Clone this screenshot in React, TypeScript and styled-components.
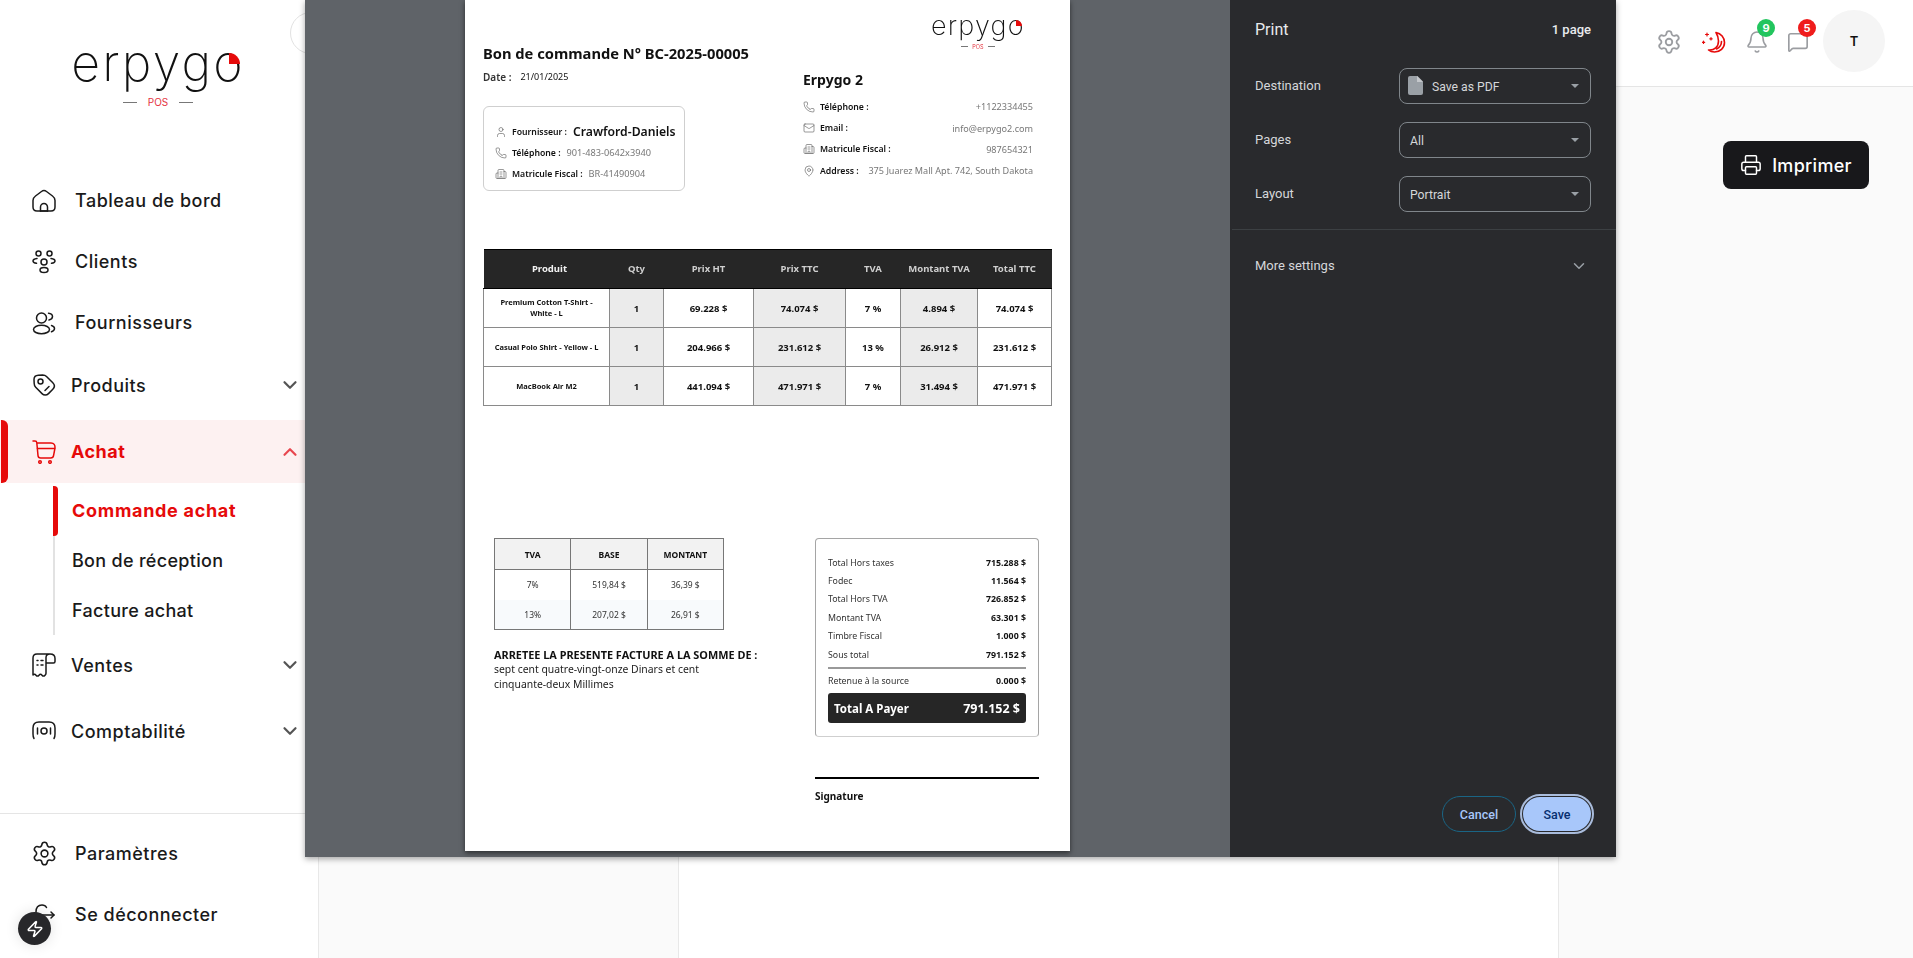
import styled, { createGlobalStyle } from 'styled-components';
import {
  Building2,
  ChevronDown,
  ChevronLeft,
  ChevronUp,
  Bell,
  Mail,
  MapPin,
  MessageSquare,
  Phone,
  Printer,
  Settings,
  User,
  Zap,
} from 'lucide-react';
import type { ReactNode } from 'react';

const GlobalStyle = createGlobalStyle`
  * { box-sizing: border-box; }
  html, body { margin: 0; height: 100%; overflow: hidden; background: #fafafa; }
  body { font-family: "Inter", "Liberation Sans", sans-serif; color: #111; }
`;

const SvgIcon = ({ children }: { children: ReactNode }) => (
  <svg width="24" height="24" viewBox="0 0 24 24" fill="none" stroke="currentColor" strokeWidth="1.5" strokeLinecap="round" strokeLinejoin="round">
    {children}
  </svg>
);

const HomeIcon = () => (
  <SvgIcon>
    <path d="M1 11.500C1 9.500 1.800 8.300 3.500 7l6-4.500c1.500-1.100 3.500-1.100 5 0l6 4.500c1.700 1.300 2.500 2.500 2.500 4.500v6.500c0 2.700-1.500 4-4 4H5c-2.500 0-4-1.300-4-4z" />
    <path d="M8.500 22v-4a3.500 3.500 0 0 1 7 0v4" />
    <path d="M8.500 22h7" />
  </SvgIcon>
);

const ClientsIcon = () => (
  <SvgIcon>
    <circle cx="6.500" cy="3.500" r="2.500" />
    <circle cx="17.500" cy="3.500" r="2.500" />
    <circle cx="12" cy="12" r="3" />
    <ellipse cx="12" cy="20" rx="4" ry="2.500" />
    <path d="M5 8.500C2.500 8.800 1 9.800 1 11s1.300 2 3.500 2.300" />
    <path d="M19 8.500c2.500.3 4 1.300 4 2.500s-1.300 2-3.500 2.300" />
  </SvgIcon>
);

const SuppliersIcon = () => (
  <SvgIcon>
    <circle cx="9.500" cy="7" r="5" />
    <ellipse cx="9.500" cy="18.500" rx="8" ry="4.200" />
    <path d="M16.500 2.200c2.300.3 4 1.300 4 3.300s-1.500 3-3.500 3.500" />
    <path d="M19.500 14.500c2 .6 3 1.600 3 3s-1 2.500-3 3.200" />
  </SvgIcon>
);

const TagIcon = () => (
  <SvgIcon>
    <path d="M2 6.500C2 4 3.800 2.300 6.300 2.200l4.400-.2c1.500 0 2.800.5 3.800 1.500l6.300 6.300c1.900 1.900 1.900 4.600 0 6.500l-4.300 4.300c-1.900 1.900-4.600 1.900-6.500 0l-6.300-6.300C2.700 13.300 2.200 12 2.200 10.600z" />
    <circle cx="8.500" cy="8.500" r="2.500" />
    <path d="M17 13.500l-4 4" />
  </SvgIcon>
);

const CartIcon = () => (
  <SvgIcon>
    <path d="M1 1h2c1 0 1.700.7 1.800 1.700L6 15.500C6.100 17 7 18 8.600 18h10c1.600 0 2.800-1 3-2.600L23 8c.2-3-1-5-4-5H5" />
    <path d="M5.500 8.500h17" />
    <circle cx="8" cy="22" r="1.300" />
    <circle cx="18" cy="22" r="1.300" />
  </SvgIcon>
);

const ReceiptIcon = () => (
  <SvgIcon>
    <path d="M18 1H5C2.500 1 1 2.500 1 5v17c1-1 2-1 3 .2 1 1.200 2 1.200 3 0s2-1.200 3 0 2 1.200 3 0c.7-.8 1-1 1-2V4.500C14 2.500 15.500 1 18 1c3 0 5 1.500 5 4.500v3c0 1-.5 1.500-1.500 1.500H14" />
    <path d="M5 7.500h1M9 7.500h2M5 12h1M9 12h2" />
  </SvgIcon>
);

const MoneyIcon = () => (
  <SvgIcon>
    <path d="M2 19.500C1.300 18.500 1 17 1 15V9c0-4 2-6 6-6h10c4 0 6 2 6 6v6c0 2-.3 3.500-1 4.500" />
    <circle cx="12" cy="12" r="3" />
    <path d="M5.500 9v6M18.500 9v6" />
  </SvgIcon>
);

const SignOutIcon = () => (
  <SvgIcon>
    <path d="M4 14V9c0-4 2-7 6-7 2 0 3.500.7 4.500 2.500" />
    <path d="M8 12h14" />
    <path d="M19 9l3 3-3 3" />
    <path d="M14.500 19.500C13.500 21.300 12 22 10 22c-3 0-5-1.500-5.500-4" />
  </SvgIcon>
);

const MoonIcon = () => (
  <svg width="24" height="24" viewBox="0 0 24 24" fill="none" stroke="#e60a0a" strokeWidth="1.600" strokeLinecap="round" strokeLinejoin="round">
    <path d="M14 2.500c5 1 8.500 5 8.500 10 0 5.500-4.500 9.500-10 9.500-2.500 0-4.500-.8-6-2 6 .5 10-3 10-9 0-3.500-1-6-2.500-8.500z" />
    <path d="M14.500 19c3-1.500 5-4 5-7.500" />
    <path d="M5 3v3M3.500 4.500h3M9 7.500v2.500M7.800 8.800h2.400M1.500 11v2.500M.3 12.300h2.400" strokeWidth="1.200" />
  </svg>
);

const FileGlyph = () => (
  <svg width="15" height="19" viewBox="0 0 15 19">
    <path d="M2 0h7.500L15 5.500V17a2 2 0 0 1-2 2H2a2 2 0 0 1-2-2V2a2 2 0 0 1 2-2z" fill="#9aa0a6" />
    <path d="M9 0l6 6H9z" fill="#c4c7cb" />
  </svg>
);

type NavEntry = { label: string; icon: ReactNode; height: number };

const topLinks: NavEntry[] = [
  { label: 'Tableau de bord', icon: <HomeIcon />, height: 61 },
  { label: 'Clients', icon: <ClientsIcon />, height: 61 },
  { label: 'Fournisseurs', icon: <SuppliersIcon />, height: 61 },
];

const purchaseLinks = ['Commande achat', 'Bon de réception', 'Facture achat'];

const supplierRows = [
  { label: 'Téléphone :', value: '901-483-0642x3940', icon: <Phone size={12} strokeWidth={1.2} /> },
  { label: 'Matricule Fiscal :', value: 'BR-41490904', icon: <Building2 size={12} strokeWidth={1.2} /> },
];

const companyRows = [
  { label: 'Téléphone :', value: '+1122334455', icon: <Phone size={12} strokeWidth={1.2} /> },
  { label: 'Email :', value: 'info@erpygo2.com', icon: <Mail size={12} strokeWidth={1.2} /> },
  { label: 'Matricule Fiscal :', value: '987654321', icon: <Building2 size={12} strokeWidth={1.2} /> },
  { label: 'Address :', value: '375 Juarez Mall Apt. 742, South Dakota', icon: <MapPin size={12} strokeWidth={1.2} /> },
];

const columns = [
  { title: 'Produit', width: 126 },
  { title: 'Qty', width: 54 },
  { title: 'Prix HT', width: 90 },
  { title: 'Prix TTC', width: 92 },
  { title: 'TVA', width: 55 },
  { title: 'Montant TVA', width: 77 },
  { title: 'Total TTC', width: 74 },
];

const products = [
  ['Premium Cotton T-Shirt - White - L', '1', '69.228 $', '74.074 $', '7 %', '4.894 $', '74.074 $'],
  ['Casual Polo Shirt - Yellow - L', '1', '204.966 $', '231.612 $', '13 %', '26.912 $', '231.612 $'],
  ['MacBook Air M2', '1', '441.094 $', '471.971 $', '7 %', '31.494 $', '471.971 $'],
];

const taxRows = [
  ['7%', '519,84 $', '36,39 $'],
  ['13%', '207,02 $', '26,91 $'],
];

const totals = [
  ['Total Hors taxes', '715.288 $'],
  ['Fodec', '11.564 $'],
  ['Total Hors TVA', '726.852 $'],
  ['Montant TVA', '63.301 $'],
  ['Timbre Fiscal', '1.000 $'],
  ['Sous total', '791.152 $'],
];

const printSelects = [
  { label: 'Destination', value: 'Save as PDF', withFile: true },
  { label: 'Pages', value: 'All', withFile: false },
  { label: 'Layout', value: 'Portrait', withFile: false },
];

export default function App() {
  return (
    <>
      <GlobalStyle />
      <Shell>
        <Sidebar>
          <CollapseButton>
            <ChevronLeft size={16} color="#e60a0a" />
          </CollapseButton>
          <LogoBlock>
            <Logo $size={50}>
              erpygo
              <LogoDot $size={11} />
            </Logo>
            <LogoSub $size={10} $line={14} $offset={5}>
              <i />
              POS
              <i />
            </LogoSub>
          </LogoBlock>
          {topLinks.map((link) => (
            <NavRow key={link.label} $height={link.height} $gap={19}>
              <NavIcon>{link.icon}</NavIcon>
              <NavLabel>{link.label}</NavLabel>
            </NavRow>
          ))}
          <NavRow $height={64} $gap={15}>
            <NavIcon>
              <TagIcon />
            </NavIcon>
            <NavLabel>Produits</NavLabel>
            <NavChevron>
              <ChevronDown size={22} strokeWidth={2.4} />
            </NavChevron>
          </NavRow>
          <ActiveRow>
            <NavIcon>
              <CartIcon />
            </NavIcon>
            <NavLabel $bold>Achat</NavLabel>
            <NavChevron>
              <ChevronUp size={22} strokeWidth={2.4} />
            </NavChevron>
          </ActiveRow>
          <SubMenu>
            {purchaseLinks.map((link, index) => (
              <SubItem key={link} $active={index === 0}>
                {link}
              </SubItem>
            ))}
          </SubMenu>
          <NavRow $height={60} $gap={15}>
            <NavIcon>
              <ReceiptIcon />
            </NavIcon>
            <NavLabel>Ventes</NavLabel>
            <NavChevron>
              <ChevronDown size={22} strokeWidth={2.4} />
            </NavChevron>
          </NavRow>
          <NavRow $height={60} $gap={15} $pushDown={6}>
            <NavIcon>
              <MoneyIcon />
            </NavIcon>
            <NavLabel>Comptabilité</NavLabel>
            <NavChevron>
              <ChevronDown size={22} strokeWidth={2.4} />
            </NavChevron>
          </NavRow>
          <SidebarFooter>
            <NavRow $height={61} $gap={19}>
              <NavIcon>
                <Settings size={27} strokeWidth={1.4} />
              </NavIcon>
              <NavLabel>Paramètres</NavLabel>
            </NavRow>
            <NavRow $height={61} $gap={19}>
              <NavIcon>
                <SignOutIcon />
              </NavIcon>
              <NavLabel>Se déconnecter</NavLabel>
            </NavRow>
            <BoltBadge>
              <Zap size={18} strokeWidth={2} />
            </BoltBadge>
          </SidebarFooter>
        </Sidebar>

        <Main>
          <TopBar>
            <TopIcon $after={4}>
              <Settings size={26} strokeWidth={1.7} />
            </TopIcon>
            <TopIcon $after={2}>
              <MoonIcon />
            </TopIcon>
            <TopIcon>
              <Bell size={24} strokeWidth={1.6} />
              <CountBadge $color="#22c55e">9</CountBadge>
            </TopIcon>
            <TopIcon>
              <MessageSquare size={22} strokeWidth={1.8} />
              <CountBadge $color="#ef1c1c">5</CountBadge>
            </TopIcon>
            <Avatar>T</Avatar>
          </TopBar>
          <Content>
            <SidePane />
            <CenterPane />
            <ActionPane>
              <PrintButton>
                <Printer size={22} strokeWidth={1.6} />
                Imprimer
              </PrintButton>
            </ActionPane>
          </Content>
        </Main>
      </Shell>

      <PrintDialog>
        <Preview>
          <Sheet>
            <SheetLogo>
              <Logo $size={27}>
                erpygo
                <LogoDot $size={6} />
              </Logo>
              <LogoSub $size={5.5} $line={7} $offset={3}>
                <i />
                POS
                <i />
              </LogoSub>
            </SheetLogo>
            <SheetTop>
              <SheetLeft>
                <DocTitle>Bon de commande N° BC-2025-00005</DocTitle>
                <DateLine>
                  <b>Date :</b>
                  <span>21/01/2025</span>
                </DateLine>
                <SupplierBox>
                  <SupplierRow>
                    <User size={12} strokeWidth={1.2} />
                    <b>Fournisseur :</b>
                    <SupplierName>Crawford-Daniels</SupplierName>
                  </SupplierRow>
                  {supplierRows.map((row) => (
                    <SupplierRow key={row.label}>
                      {row.icon}
                      <b>{row.label}</b>
                      <span>{row.value}</span>
                    </SupplierRow>
                  ))}
                </SupplierBox>
              </SheetLeft>
              <SheetRight>
                <CompanyName>Erpygo 2</CompanyName>
                {companyRows.map((row) => (
                  <CompanyRow key={row.label}>
                    {row.icon}
                    <b>{row.label}</b>
                    <span>{row.value}</span>
                  </CompanyRow>
                ))}
              </SheetRight>
            </SheetTop>

            <ProductTable>
              <colgroup>
                {columns.map((column) => (
                  <col key={column.title} width={column.width} />
                ))}
              </colgroup>
              <thead>
                <tr>
                  {columns.map((column, index) => (
                    <HeadCell key={column.title} $first={index === 0}>
                      {column.title}
                    </HeadCell>
                  ))}
                </tr>
              </thead>
              <tbody>
                {products.map((row) => (
                  <tr key={row[0]}>
                    {row.map((cell, index) => (
                      <BodyCell key={index} $shaded={index % 2 === 1 && index !== 2} $name={index === 0}>
                        {cell}
                      </BodyCell>
                    ))}
                  </tr>
                ))}
              </tbody>
            </ProductTable>

            <SheetBottom>
              <TaxColumn>
                <TaxTable>
                  <thead>
                    <tr>
                      <TaxHead>TVA</TaxHead>
                      <TaxHead>BASE</TaxHead>
                      <TaxHead>MONTANT</TaxHead>
                    </tr>
                  </thead>
                  <tbody>
                    {taxRows.map((row, rowIndex) => (
                      <TaxRow key={row[0]} $tinted={rowIndex === 1}>
                        {row.map((cell) => (
                          <TaxCell key={cell}>{cell}</TaxCell>
                        ))}
                      </TaxRow>
                    ))}
                  </tbody>
                </TaxTable>
                <AmountTitle>ARRETEE LA PRESENTE FACTURE A LA SOMME DE :</AmountTitle>
                <AmountText>
                  sept cent quatre-vingt-onze Dinars et cent
                  <br />
                  cinquante-deux Millimes
                </AmountText>
              </TaxColumn>
              <TotalsColumn>
                <TotalsBox>
                  {totals.map(([label, value]) => (
                    <TotalLine key={label}>
                      <span>{label}</span>
                      <b>{value}</b>
                    </TotalLine>
                  ))}
                  <TotalRule />
                  <TotalLine>
                    <span>Retenue à la source</span>
                    <b>0.000 $</b>
                  </TotalLine>
                  <GrandTotal>
                    <span>Total A Payer</span>
                    <strong>791.152 $</strong>
                  </GrandTotal>
                </TotalsBox>
                <SignatureRule />
                <SignatureLabel>Signature</SignatureLabel>
              </TotalsColumn>
            </SheetBottom>
          </Sheet>
        </Preview>

        <PrintPanel>
          <PanelHeading>
            <PanelTitle>Print</PanelTitle>
            <PageCount>1 page</PageCount>
          </PanelHeading>
          <SelectList>
            {printSelects.map((item) => (
              <SelectRow key={item.label}>
                <SelectLabel>{item.label}</SelectLabel>
                <SelectBox>
                  {item.withFile && (
                    <FileSlot>
                      <FileGlyph />
                    </FileSlot>
                  )}
                  <SelectValue>{item.value}</SelectValue>
                  <SelectCaret />
                </SelectBox>
              </SelectRow>
            ))}
          </SelectList>
          <MoreSettings>
            <SelectLabel>More settings</SelectLabel>
            <ChevronDown size={18} color="#9aa0a6" />
          </MoreSettings>
          <PanelFooter>
            <CancelButton>Cancel</CancelButton>
            <SaveButton>Save</SaveButton>
          </PanelFooter>
        </PrintPanel>
      </PrintDialog>
    </>
  );
}

const Shell = styled.div`
  display: flex;
  width: 100%;
  height: 100vh;
`;

const Sidebar = styled.aside`
  position: relative;
  display: flex;
  flex-direction: column;
  flex: 0 0 319px;
  background: #fff;
  border-right: 1px solid #e8e8e8;
  font-family: "Inter", "Liberation Sans", sans-serif;
`;

const CollapseButton = styled.div`
  position: absolute;
  top: 12px;
  left: 290px;
  display: flex;
  align-items: center;
  justify-content: center;
  width: 42px;
  height: 42px;
  background: #fff;
  border: 1px solid #e2e2e2;
  border-radius: 50%;
`;

const LogoBlock = styled.div`
  display: flex;
  flex-direction: column;
  align-items: center;
  flex: 0 0 170px;
  width: 316px;
  padding-top: 36px;
`;

const Logo = styled.div<{ $size: number }>`
  position: relative;
  font-family: "Inter", "Lato", sans-serif;
  font-weight: 200;
  font-size: ${({ $size }) => $size}px;
  line-height: 1.1;
  letter-spacing: 0.045em;
  color: #111;
`;

const LogoDot = styled.span<{ $size: number }>`
  position: absolute;
  right: 3%;
  top: 31%;
  width: ${({ $size }) => $size}px;
  height: ${({ $size }) => $size}px;
  background: #e60a0a;
  border-radius: 0 100% 0 0;
`;

const LogoSub = styled.div<{ $size: number; $line: number; $offset: number }>`
  display: flex;
  align-items: center;
  gap: ${({ $line }) => $line - 3}px;
  margin-top: ${({ $offset }) => $offset}px;
  font-family: "Inter", sans-serif;
  font-size: ${({ $size }) => $size}px;
  color: #e4343f;

  i {
    width: ${({ $line }) => $line}px;
    height: 1px;
    background: #777;
  }
`;

const NavRow = styled.div<{ $height: number; $gap: number; $pushDown?: number }>`
  display: flex;
  align-items: center;
  flex: 0 0 ${({ $height }) => $height}px;
  gap: ${({ $gap }) => $gap}px;
  margin-top: ${({ $pushDown }) => $pushDown ?? 0}px;
  padding: 0 17px 0 32px;
  color: #1a1a1a;
`;

const ActiveRow = styled.div`
  position: relative;
  display: flex;
  align-items: center;
  flex: 0 0 63px;
  gap: 15px;
  margin-top: 3px;
  padding: 0 17px 0 32px;
  background: #fdf1f1;
  color: #e60a0a;

  &::before {
    content: '';
    position: absolute;
    left: 1px;
    top: 0;
    bottom: 0;
    width: 7px;
    background: #e60a0a;
    border-radius: 0 6px 6px 0;
  }
`;

const NavIcon = styled.span`
  display: flex;
  align-items: center;
  justify-content: center;
  width: 24px;
  height: 24px;

  svg {
    flex: none;
  }
`;

const NavLabel = styled.span<{ $bold?: boolean }>`
  font-size: 18px;
  font-weight: ${({ $bold }) => ($bold ? 700 : 500)};
  letter-spacing: 0.5px;
`;

const NavChevron = styled.span`
  display: flex;
  margin-left: auto;
  color: #555;

  ${ActiveRow} & {
    color: #e8474f;
  }
`;

const SubMenu = styled.div`
  display: flex;
  flex-direction: column;
  flex: 0 0 149px;
  margin: 3px 0 0 53px;
  border-left: 2px solid #e2e2e2;
`;

const SubItem = styled.div<{ $active?: boolean }>`
  position: relative;
  display: flex;
  align-items: center;
  flex: 0 0 49.660px;
  padding-left: 17px;
  font-size: 18px;
  font-weight: ${({ $active }) => ($active ? 700 : 500)};
  letter-spacing: ${({ $active }) => ($active ? '0.7px' : '0.3px')};
  color: ${({ $active }) => ($active ? '#e60a0a' : '#1a1a1a')};

  &::before {
    content: '';
    display: ${({ $active }) => ($active ? 'block' : 'none')};
    position: absolute;
    left: -2px;
    top: 0;
    bottom: 0;
    width: 5px;
    background: #e60a0a;
    border-radius: 0 4px 4px 0;
  }
`;

const SidebarFooter = styled.div`
  position: relative;
  display: flex;
  flex-direction: column;
  margin-top: auto;
  flex: 0 0 145px;
  padding-top: 9px;
  border-top: 1px solid #e5e5e5;
`;

const BoltBadge = styled.div`
  position: absolute;
  left: 18px;
  bottom: 13px;
  display: flex;
  align-items: center;
  justify-content: center;
  width: 33px;
  height: 33px;
  background: #27272a;
  border-radius: 50%;
  color: #fff;
  box-shadow: 0 0 14px rgba(0, 0, 0, 0.12);
`;

const Main = styled.main`
  display: flex;
  flex-direction: column;
  flex: 1;
  min-width: 0;
`;

const TopBar = styled.header`
  display: flex;
  align-items: center;
  justify-content: flex-end;
  flex: 0 0 87px;
  gap: 17px;
  padding: 0 28px 4px 0;
  background: #fff;
  border-bottom: 1px solid #e5e5e5;
`;

const TopIcon = styled.span<{ $after?: number }>`
  position: relative;
  display: flex;
  align-items: center;
  justify-content: center;
  width: 24px;
  height: 24px;
  margin-top: 2px;
  margin-right: ${({ $after }) => $after ?? 0}px;
  color: #9b9da1;

  svg {
    flex: none;
  }
`;

const CountBadge = styled.span<{ $color: string }>`
  position: absolute;
  top: -11px;
  left: 12px;
  display: flex;
  align-items: center;
  justify-content: center;
  width: 18px;
  height: 18px;
  border-radius: 50%;
  background: ${({ $color }) => $color};
  color: #fff;
  font-size: 11px;
  font-weight: 700;
`;

const Avatar = styled.div`
  display: flex;
  align-items: center;
  justify-content: center;
  width: 62px;
  height: 62px;
  margin-left: -4px;
  border-radius: 50%;
  background: #f5f5f5;
  font-size: 13px;
  font-weight: 600;
`;

const Content = styled.div`
  display: flex;
  flex: 1;
`;

const SidePane = styled.div`
  flex: 0 0 359px;
  background: #fafafa;
`;

const CenterPane = styled.div`
  flex: 0 0 881px;
  background: #fff;
  border-left: 1px solid #e8e8e8;
  border-right: 1px solid #e8e8e8;
`;

const ActionPane = styled.div`
  flex: 1;
  padding: 54px 0 0 164px;
  background: #fafafa;
`;

const PrintButton = styled.div`
  display: flex;
  align-items: center;
  justify-content: center;
  gap: 10px;
  width: 146px;
  height: 48px;
  border-radius: 8px;
  background: #18181b;
  color: #fff;
  font-size: 18px;
  font-weight: 500;
  letter-spacing: 0.3px;
`;

const PrintDialog = styled.div`
  position: fixed;
  top: 0;
  left: 305px;
  display: flex;
  width: 1311px;
  height: 857px;
  box-shadow: 0 2px 6px rgba(0, 0, 0, 0.35);
`;

const Preview = styled.div`
  display: flex;
  justify-content: center;
  flex: 0 0 925px;
  background: #5f6368;
`;

const Sheet = styled.div`
  position: relative;
  width: 605px;
  height: 851px;
  padding: 0 18px;
  background: #fff;
  box-shadow: 0 2px 5px rgba(0, 0, 0, 0.55);
  font-family: "Noto Sans", "Open Sans", sans-serif;
  color: #111;
`;

const SheetLogo = styled.div`
  position: absolute;
  top: 11px;
  left: 466px;
  display: flex;
  flex-direction: column;
  align-items: center;
`;

const SheetTop = styled.div`
  display: flex;
  height: 249px;
`;

const SheetLeft = styled.div`
  flex: 0 0 320px;
  padding-top: 42px;
`;

const SheetRight = styled.div`
  flex: 1;
  padding: 70px 19px 0 0;
`;

const DocTitle = styled.div`
  font-size: 14.700px;
  line-height: 22px;
  font-weight: 700;
  white-space: nowrap;
`;

const DateLine = styled.div`
  display: flex;
  gap: 9px;
  margin-top: 6px;
  font-size: 9px;
  line-height: 14px;

  b {
    font-size: 10px;
    font-weight: 600;
    color: #333;
  }
`;

const SupplierBox = styled.div`
  display: flex;
  flex-direction: column;
  gap: 1px;
  width: 202px;
  height: 85px;
  margin-top: 22px;
  padding: 14.500px 0 0 11px;
  border: 1.500px solid #cfcfcf;
  border-radius: 6px;
`;

const SupplierRow = styled.div`
  display: flex;
  align-items: center;
  height: 20px;
  font-size: 8.700px;
  white-space: nowrap;

  svg {
    flex: none;
    margin-right: 5px;
    color: #555;
  }

  b {
    font-weight: 600;
    margin-right: 6px;
  }

  span {
    font-size: 9.200px;
    color: #777;
  }
`;

const SupplierName = styled.span`
  && {
    color: #111;
    font-size: 12.200px;
    font-weight: 600;
  }
`;

const CompanyName = styled.div`
  margin-bottom: 6px;
  font-size: 14px;
  line-height: 20px;
  font-weight: 700;
`;

const CompanyRow = styled.div`
  display: flex;
  align-items: center;
  height: 21.400px;
  font-size: 8.700px;
  white-space: nowrap;

  svg {
    flex: none;
    margin-right: 5px;
    color: #555;
  }

  b {
    font-weight: 600;
  }

  span {
    margin-left: auto;
    font-size: 9.100px;
    color: #777;
  }
`;

const ProductTable = styled.table`
  width: 568px;
  border-collapse: collapse;
  table-layout: fixed;
`;

const HeadCell = styled.th<{ $first?: boolean }>`
  height: 39px;
  padding: 0 0 2px ${({ $first }) => ($first ? '6px' : '0')};
  background: #262626;
  border: 1.500px solid #000;
  border-width: 1.500px 0;
  color: ${({ $first }) => ($first ? '#f2f2f2' : '#cfcfcf')};
  font-size: 9.500px;
  font-weight: 700;
`;

const BodyCell = styled.td<{ $shaded?: boolean; $name?: boolean }>`
  height: 39px;
  padding: 0 ${({ $name }) => ($name ? '8px' : '0')};
  background: ${({ $shaded }) => ($shaded ? '#ebebeb' : '#fff')};
  border: 1px solid #8a8a8a;
  text-align: center;
  font-size: ${({ $name }) => ($name ? '7.500px' : '9.500px')};
  line-height: 11px;
  font-weight: 700;
`;

const SheetBottom = styled.div`
  display: flex;
  justify-content: space-between;
  margin-top: 132px;
  padding: 0 13px 0 11px;
`;

const TaxColumn = styled.div`
  flex: 0 0 270px;
`;

const TaxTable = styled.table`
  width: 230px;
  border-collapse: collapse;
  table-layout: fixed;
`;

const TaxHead = styled.th`
  height: 31px;
  padding: 0;
  background: #f2f2f2;
  border: 1px solid #777;
  font-size: 8.500px;
  font-weight: 700;
`;

const TaxRow = styled.tr<{ $tinted?: boolean }>`
  background: ${({ $tinted }) => ($tinted ? '#f8fafc' : '#fff')};

  td {
    border-bottom: ${({ $tinted }) => ($tinted ? '1px solid #777' : '0')};
  }
`;

const TaxCell = styled.td`
  height: 30px;
  padding: 0;
  border-left: 1px solid #777;
  border-right: 1px solid #777;
  text-align: center;
  font-size: 8.500px;
  color: #333;
`;

const AmountTitle = styled.div`
  margin-top: 17px;
  font-size: 10.900px;
  line-height: 15px;
  font-weight: 700;
  white-space: nowrap;
`;

const AmountText = styled.div`
  font-size: 10.400px;
  line-height: 15px;
  color: #222;
`;

const TotalsColumn = styled.div`
  flex: 0 0 224px;
`;

const TotalsBox = styled.div`
  display: flex;
  flex-direction: column;
  height: 199px;
  padding: 14.500px 12px 0;
  border: 1px solid #a5a5a5;
  border-bottom-color: #cfcfcf;
  border-radius: 4px;
`;

const TotalLine = styled.div`
  display: flex;
  align-items: center;
  justify-content: space-between;
  flex: 0 0 18.400px;
  font-size: 8.800px;
  color: #333;

  b {
    font-weight: 700;
    color: #111;
  }
`;

const TotalRule = styled.div`
  flex: 0 0 2px;
  margin: 3px 0 3px;
  background: #999;
`;

const GrandTotal = styled.div`
  display: flex;
  align-items: center;
  justify-content: space-between;
  flex: 0 0 30px;
  margin-top: 3px;
  padding: 0 6px;
  background: #262626;
  border-radius: 3px;
  color: #fff;

  span {
    font-size: 11.500px;
    font-weight: 700;
  }

  strong {
    font-size: 12.500px;
    font-weight: 700;
  }
`;

const SignatureRule = styled.div`
  height: 2px;
  margin-top: 40px;
  background: #000;
`;

const SignatureLabel = styled.div`
  margin-top: 10px;
  font-size: 10px;
  line-height: 14px;
  font-weight: 700;
`;

const PrintPanel = styled.div`
  display: flex;
  flex-direction: column;
  flex: 1;
  background: #292a2d;
  font-family: "Roboto", "Liberation Sans", sans-serif;
  color: #e8eaed;
`;

const PanelHeading = styled.div`
  display: flex;
  align-items: center;
  justify-content: space-between;
  height: 58px;
  padding: 0 25px;
`;

const PanelTitle = styled.div`
  font-size: 16px;
`;

const PageCount = styled.div`
  font-size: 13px;
  font-weight: 500;
`;

const SelectList = styled.div`
  display: flex;
  flex-direction: column;
  gap: 18.500px;
  margin-left: 2px;
  padding: 10px 25px 17px;
  border-bottom: 1px solid #3c4043;
`;

const SelectRow = styled.div`
  display: flex;
  align-items: center;
  justify-content: space-between;
  margin-left: -2px;
`;

const SelectLabel = styled.div`
  font-size: 13px;
  color: #d5d7da;
`;

const SelectBox = styled.div`
  display: flex;
  align-items: center;
  width: 192px;
  height: 35.500px;
  padding: 3px 10px 0;
  border: 1px solid #80868b;
  border-radius: 8px;
  font-size: 12.200px;
`;

const FileSlot = styled.span`
  display: flex;
  margin: -3px 9px 0 -2px;
`;

const SelectValue = styled.span`
  color: #d5d7da;
`;

const SelectCaret = styled.span`
  margin: -3px 1px 0 auto;
  border-left: 4px solid transparent;
  border-right: 4px solid transparent;
  border-top: 4px solid #9aa0a6;
`;

const MoreSettings = styled.div`
  display: flex;
  align-items: center;
  justify-content: space-between;
  height: 72px;
  padding: 0 28px 0 25px;
`;

const PanelFooter = styled.div`
  display: flex;
  align-items: center;
  justify-content: flex-end;
  gap: 7px;
  margin-top: auto;
  padding: 0 23px 25px 0;
`;

const CancelButton = styled.div`
  display: flex;
  align-items: center;
  justify-content: center;
  width: 74px;
  height: 36px;
  border: 1px solid #1a6585;
  border-radius: 18px;
  color: #a8c7fa;
  font-size: 12.500px;
  font-weight: 500;
`;

const SaveButton = styled.div`
  display: flex;
  align-items: center;
  justify-content: center;
  width: 68px;
  height: 34px;
  margin-right: 2px;
  border-radius: 17px;
  background: #a8c7fa;
  outline: 2px solid #a9bcdc;
  outline-offset: 1px;
  color: #062e6f;
  font-size: 12.500px;
  font-weight: 500;
`;
